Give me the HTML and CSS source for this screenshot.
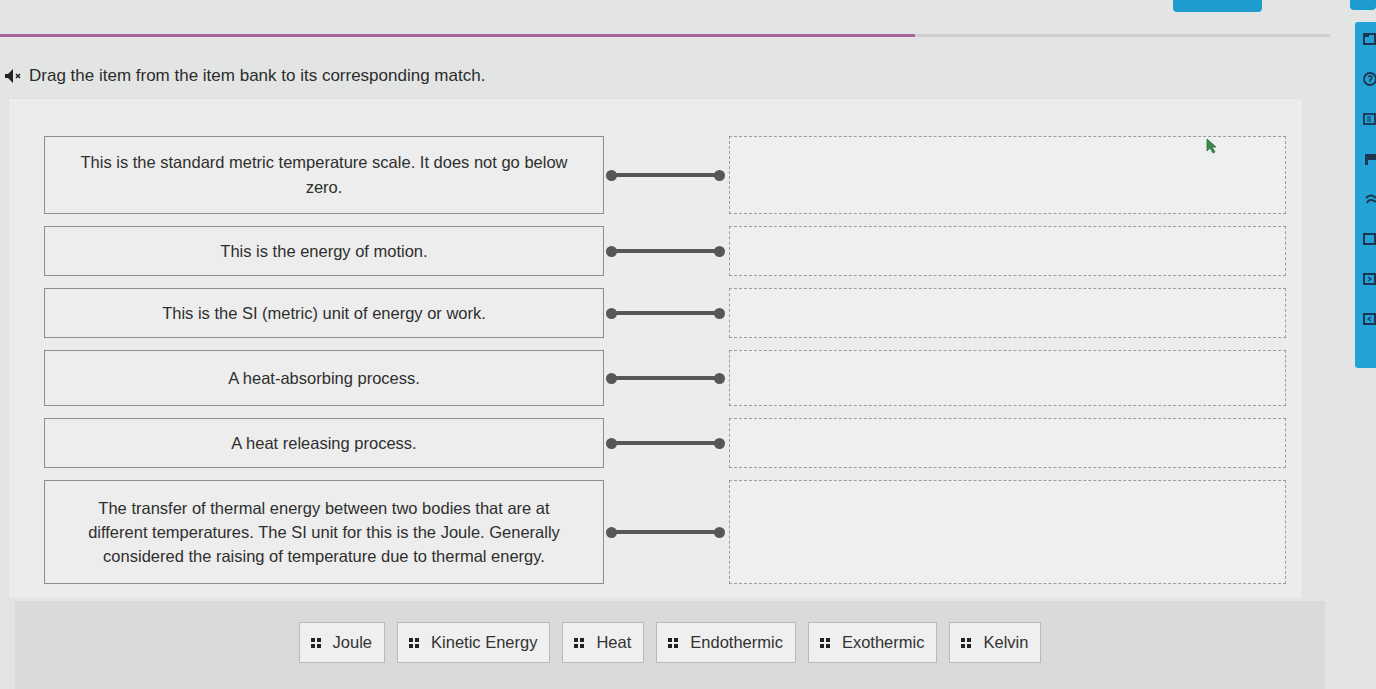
FILE: index.html
```html
<!DOCTYPE html>
<html>
<head>
<meta charset="utf-8">
<link rel="stylesheet" href="styles.css">
</head>
<body>
<div class="header">
  <div class="tab tab-main"></div>
  <div class="tab tab-side"></div>
</div>
<div class="app">
  <div class="content">
    <div class="progress"><div class="progress-fill"></div><div class="progress-rest"></div></div>
    <div class="instruction">
      <svg class="speaker" width="20" height="16" viewBox="0 0 20 16"><polygon points="1,6 4,6 9,1 9,15 4,10 1,10" fill="#222"/><path d="M12 6 L16 10 M16 6 L12 10" stroke="#222" stroke-width="1.6"/></svg>
      <span>Drag the item from the item bank to its corresponding match.</span>
    </div>
    <div class="panel">
      <div class="rows">
        <div class="row r1">
          <div class="prompt">This is the standard metric temperature scale. It does not go below zero.</div>
          <div class="connector"><span class="dot"></span><span class="bar"></span><span class="dot"></span></div>
          <div class="drop"></div>
        </div>
        <div class="row r2">
          <div class="prompt">This is the energy of motion.</div>
          <div class="connector"><span class="dot"></span><span class="bar"></span><span class="dot"></span></div>
          <div class="drop"></div>
        </div>
        <div class="row r3">
          <div class="prompt">This is the SI (metric) unit of energy or work.</div>
          <div class="connector"><span class="dot"></span><span class="bar"></span><span class="dot"></span></div>
          <div class="drop"></div>
        </div>
        <div class="row r4">
          <div class="prompt">A heat-absorbing process.</div>
          <div class="connector"><span class="dot"></span><span class="bar"></span><span class="dot"></span></div>
          <div class="drop"></div>
        </div>
        <div class="row r5">
          <div class="prompt">A heat releasing process.</div>
          <div class="connector"><span class="dot"></span><span class="bar"></span><span class="dot"></span></div>
          <div class="drop"></div>
        </div>
        <div class="row r6">
          <div class="prompt wide">The transfer of thermal energy between two bodies that are at different temperatures. The SI unit for this is the Joule. Generally considered the raising of temperature due to thermal energy.</div>
          <div class="connector"><span class="dot"></span><span class="bar"></span><span class="dot"></span></div>
          <div class="drop"></div>
        </div>
      </div>
      <svg class="cursor" width="12" height="16" viewBox="0 0 12 16"><polygon points="1,1 1,13 4,10 7,15 9,14 6,9 10,9" fill="#3a8a4a" stroke="#2b6b38" stroke-width="0.8"/></svg>
    </div>
    <div class="bank">
      <div class="item"><svg class="grip" width="10" height="10" viewBox="0 0 10 10"><rect x="0" y="0" width="4" height="4" fill="#222"/><rect x="6" y="0" width="4" height="4" fill="#222"/><rect x="0" y="6" width="4" height="4" fill="#222"/><rect x="6" y="6" width="4" height="4" fill="#222"/></svg>Joule</div>
      <div class="item"><svg class="grip" width="10" height="10" viewBox="0 0 10 10"><rect x="0" y="0" width="4" height="4" fill="#222"/><rect x="6" y="0" width="4" height="4" fill="#222"/><rect x="0" y="6" width="4" height="4" fill="#222"/><rect x="6" y="6" width="4" height="4" fill="#222"/></svg>Kinetic Energy</div>
      <div class="item"><svg class="grip" width="10" height="10" viewBox="0 0 10 10"><rect x="0" y="0" width="4" height="4" fill="#222"/><rect x="6" y="0" width="4" height="4" fill="#222"/><rect x="0" y="6" width="4" height="4" fill="#222"/><rect x="6" y="6" width="4" height="4" fill="#222"/></svg>Heat</div>
      <div class="item"><svg class="grip" width="10" height="10" viewBox="0 0 10 10"><rect x="0" y="0" width="4" height="4" fill="#222"/><rect x="6" y="0" width="4" height="4" fill="#222"/><rect x="0" y="6" width="4" height="4" fill="#222"/><rect x="6" y="6" width="4" height="4" fill="#222"/></svg>Endothermic</div>
      <div class="item"><svg class="grip" width="10" height="10" viewBox="0 0 10 10"><rect x="0" y="0" width="4" height="4" fill="#222"/><rect x="6" y="0" width="4" height="4" fill="#222"/><rect x="0" y="6" width="4" height="4" fill="#222"/><rect x="6" y="6" width="4" height="4" fill="#222"/></svg>Exothermic</div>
      <div class="item"><svg class="grip" width="10" height="10" viewBox="0 0 10 10"><rect x="0" y="0" width="4" height="4" fill="#222"/><rect x="6" y="0" width="4" height="4" fill="#222"/><rect x="0" y="6" width="4" height="4" fill="#222"/><rect x="6" y="6" width="4" height="4" fill="#222"/></svg>Kelvin</div>
    </div>
  </div>
  <div class="sidebar">
    <svg class="sicon" width="14" height="14" viewBox="0 0 14 14"><rect x="2" y="2" width="11" height="10" fill="none" stroke="#1d3550" stroke-width="2"/><rect x="3" y="3" width="4" height="2" fill="#1d3550"/></svg>
    <svg class="sicon" width="14" height="14" viewBox="0 0 14 14"><circle cx="8" cy="7" r="6" fill="none" stroke="#1d3550" stroke-width="1.8"/><path d="M6 5 Q8 3 10 5 Q10 7 8 8 L8 10" fill="none" stroke="#1d3550" stroke-width="1.5"/></svg>
    <svg class="sicon" width="14" height="14" viewBox="0 0 14 14"><rect x="2" y="2" width="11" height="10" fill="none" stroke="#1d3550" stroke-width="1.8"/><path d="M5 5 H9 M5 7 H9 M5 9 H9" stroke="#1d3550" stroke-width="1"/></svg>
    <svg class="sicon" width="14" height="14" viewBox="0 0 14 14"><rect x="3" y="2" width="3" height="11" fill="#1d3550"/><rect x="5" y="2" width="9" height="6" fill="#1d3550"/></svg>
    <svg class="sicon" width="14" height="14" viewBox="0 0 14 14"><path d="M4 6 Q9 1 14 6 M5 11 Q6 8 9 8 Q12 8 14 10" fill="none" stroke="#1d3550" stroke-width="2"/></svg>
    <svg class="sicon" width="14" height="14" viewBox="0 0 14 14"><rect x="2" y="2" width="11" height="10" fill="none" stroke="#1d3550" stroke-width="2"/></svg>
    <svg class="sicon" width="14" height="14" viewBox="0 0 14 14"><rect x="2" y="2" width="11" height="10" fill="none" stroke="#1d3550" stroke-width="2"/><path d="M6 5 L9 7 L6 9" fill="none" stroke="#1d3550" stroke-width="1.2"/></svg>
    <svg class="sicon" width="14" height="14" viewBox="0 0 14 14"><rect x="2" y="2" width="11" height="10" fill="none" stroke="#1d3550" stroke-width="2"/><path d="M9 5 L6 7 L9 9" fill="none" stroke="#1d3550" stroke-width="1.2"/></svg>
  </div>
</div>
</body>
</html>
```

FILE: styles.css
```css
* { box-sizing: border-box; }
html, body { margin: 0; padding: 0; }
body {
  background: #e3e5e4;
  font-family: "Liberation Sans", Arial, sans-serif;
  color: #2f2f2f;
  width: 1376px;
  height: 689px;
  overflow: hidden;
}
.header {
  height: 22px;
  display: flex;
  justify-content: flex-end;
  align-items: flex-start;
}
.tab {
  background: #1f9ccf;
  border-radius: 0 0 4px 4px;
}
.tab-main { width: 89px; height: 12px; margin-right: 88px; }
.tab-side { width: 26px; height: 10px; }
.app {
  display: flex;
  align-items: flex-start;
}
.content {
  width: 1355px;
  flex: none;
}
.progress {
  margin-top: 12px;
  display: flex;
  height: 3px;
}
.progress-fill { width: 915px; background: #a8649a; }
.progress-rest { width: 415px; background: #cfd1d0; }
.instruction {
  margin-top: 29px;
  display: flex;
  align-items: center;
  gap: 5px;
  padding-left: 4px;
  font-size: 17px;
  line-height: 20px;
  color: #2c2c2c;
}
.panel {
  position: relative;
  margin: 12px 0 0 8px;
  width: 1295px;
  background: #ebedec;
  border: 1px solid #e0e2e1;
  padding: 37px 0 14px 35px;
}
.rows {
  display: flex;
  flex-direction: column;
  gap: 12px;
}
.row {
  display: grid;
  grid-template-columns: 560px 125px 557px;
  align-items: stretch;
}
.r1 { height: 78px; }
.r2, .r3, .r5 { height: 50px; }
.r4 { height: 56px; }
.r6 { height: 104px; }
.prompt {
  background: #ecedec;
  border: 1px solid #8d8f8e;
  display: flex;
  align-items: center;
  justify-content: center;
  text-align: center;
  font-size: 16.5px;
  line-height: 25px;
  padding: 0 26px;
  color: #2f2f2f;
}
.prompt.wide { padding: 0 30px; line-height: 24px; }
.connector {
  display: flex;
  align-items: center;
  padding: 0 4px 0 2px;
}
.dot {
  width: 11px;
  height: 11px;
  border-radius: 50%;
  background: #555857;
  flex: none;
}
.bar {
  flex: 1;
  height: 4px;
  background: #555857;
  margin: 0 -2px;
}
.drop {
  border: 1px dashed #9b9d9c;
  background: #eef0ef;
}
.cursor {
  position: absolute;
  left: 1197px;
  top: 39px;
}
.bank {
  margin: 2px 0 0 15px;
  width: 1310px;
  height: 92px;
  background: #d9dbda;
  display: flex;
  justify-content: center;
  align-items: flex-start;
  padding-top: 21px;
  gap: 12px;
}
.item {
  height: 41px;
  background: #eeefee;
  border: 1px solid #b9bbba;
  display: flex;
  align-items: center;
  gap: 12px;
  padding: 0 12px 0 11px;
  font-size: 16.5px;
  color: #333;
}
.grip { flex: none; }
.sidebar {
  width: 21px;
  height: 346px;
  background: #23a3d5;
  border-radius: 3px 0 0 3px;
  display: flex;
  flex-direction: column;
  gap: 26px;
  padding: 10px 0 0 7px;
  overflow: hidden;
}
.sicon { flex: none; }
```
